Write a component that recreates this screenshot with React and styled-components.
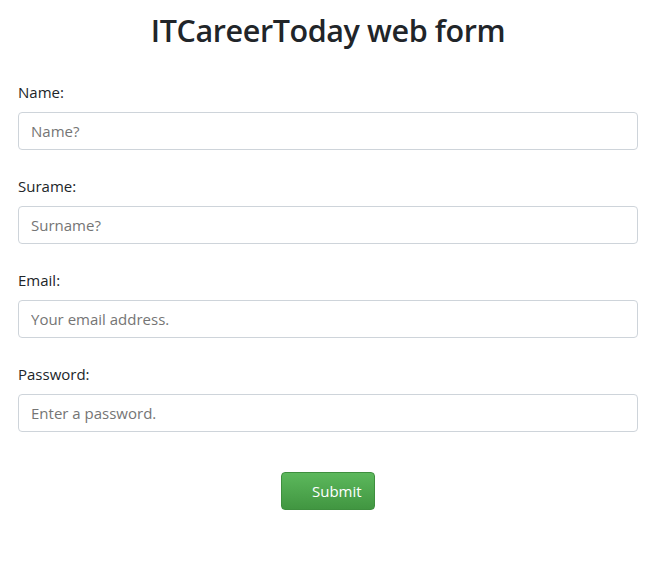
import React from 'react'
import styled, { createGlobalStyle } from 'styled-components'

const GlobalStyle = createGlobalStyle`
	* {
		box-sizing: border-box;
	}
	body {
		margin: 0;
		background: #fff;
		font-family: "Open Sans", "Noto Sans", sans-serif;
		color: #212529;
	}
`

const Page = styled.div`
	padding: 8px 13px 0 18px;
`
const Title = styled.h1`
	margin: 0 0 28px;
	text-align: center;
	font-size: 30.5px;
	font-weight: 600;
	line-height: 44px;
	color: #212529;
	letter-spacing: -0.4px;
`
const Form = styled.form`
	display: flex;
	flex-direction: column;
	gap: 24px;
`
const Group = styled.div`
	display: flex;
	flex-direction: column;
`
const Label = styled.label`
	font-size: 15px;
	line-height: 24px;
	margin-bottom: 8px;
	color: #212529;
`
const Input = styled.input`
	height: 38px;
	padding: 6px 12px;
	font-family: inherit;
	font-size: 15px;
	color: #495057;
	border: 1px solid #ced4da;
	border-radius: 4px;
	outline: none;
	::placeholder {
		color: #6c757d;
	}
`
const Actions = styled.div`
	display: flex;
	justify-content: center;
	padding-top: 16px;
`
const Button = styled.button`
	width: 94px;
	height: 38px;
	padding: 0 12px 0 30px;
	font-family: inherit;
	font-size: 15px;
	color: #fff;
	background: linear-gradient(to bottom, #5cb85c, #419641);
	border: 1px solid #3e8f3e;
	border-radius: 4px;
	text-align: left;
	cursor: pointer;
`

const fields = [
	{ label: 'Name:', placeholder: 'Name?', type: 'text' },
	{ label: 'Surame:', placeholder: 'Surname?', type: 'text' },
	{ label: 'Email:', placeholder: 'Your email address.', type: 'email' },
	{ label: 'Password:', placeholder: 'Enter a password.', type: 'password' },
]

export default function App() {
	return (
		<Page>
			<GlobalStyle />
			<Title>ITCareerToday web form</Title>
			<Form onSubmit={e => e.preventDefault()}>
				{fields.map(f => (
					<Group key={f.label}>
						<Label>{f.label}</Label>
						<Input type={f.type} placeholder={f.placeholder} />
					</Group>
				))}
				<Actions>
					<Button type="submit">Submit</Button>
				</Actions>
			</Form>
		</Page>
	)
}
